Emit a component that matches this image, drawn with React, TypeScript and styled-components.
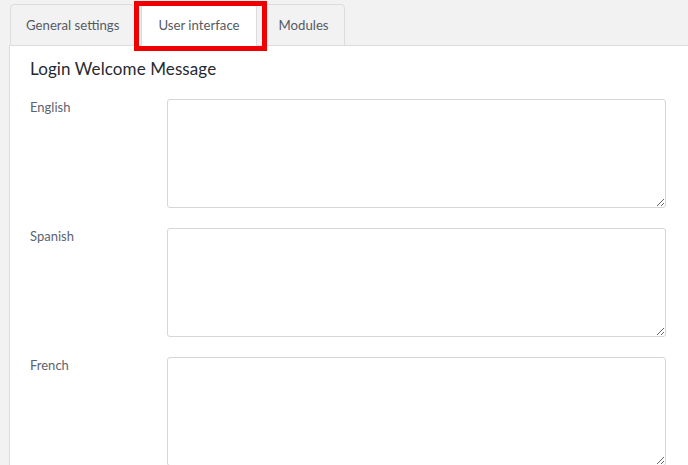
import React from 'react'
import styled, { createGlobalStyle } from 'styled-components'

const GlobalStyle = createGlobalStyle`
  html, body {
    margin: 0;
    padding: 0;
    background: #f2f2f2;
    font-family: Lato, "Open Sans", sans-serif;
  }
`

const Page = styled.div`
  padding: 4px 0 0 9px;
  width: 700px;
  overflow: hidden;
`

const TabBar = styled.div`
  display: flex;
  gap: 6px;
  padding-left: 1px;
  position: relative;
  z-index: 1;
  margin-bottom: -1px;
`

const Tab = styled.div<{ $active?: boolean }>`
  position: relative;
  padding: 0 ${p => (p.$active ? '16px' : '15px')};
  display: flex;
  align-items: center;
  font-size: 13.2px;
  color: #555b63;
  border: 1px solid #dcdcdc;
  border-bottom: ${p => (p.$active ? '1px solid #fff' : '1px solid #dcdcdc')};
  border-radius: 4px 4px 0 0;
  background: ${p => (p.$active ? '#fff' : '#f2f2f2')};
  box-sizing: border-box;
  height: 42px;
`

const Highlight = styled.div`
  position: absolute;
  z-index: 2;
  left: -8px;
  top: -4px;
  right: -11px;
  bottom: -6px;
  border: 5px solid #ee0000;
  pointer-events: none;
`

const Panel = styled.div`
  background: #fff;
  border: 1px solid #dcdcdc;
  border-right: none;
  padding: 12px 0 20px 20px;
  min-height: 420px;
`

const Heading = styled.h2`
  margin: 0 0 20px 0;
  font-size: 17px;
  font-weight: 400;
  color: #262a30;
  letter-spacing: 0.1px;
`

const Row = styled.div`
  display: flex;
  margin-bottom: 20px;
`

const Label = styled.label`
  width: 137px;
  flex-shrink: 0;
  padding-top: 0;
  font-size: 13px;
  color: #5b6470;
`

const Area = styled.textarea`
  width: 499px;
  height: 109px;
  box-sizing: border-box;
  border: 1px solid #d6d6d6;
  border-radius: 3px;
  background: #fff;
  margin: 0;
  font-family: inherit;
  resize: vertical;
`

const languages = ['English', 'Spanish', 'French']

export default function App() {
  return (
    <>
      <GlobalStyle />
      <Page>
        <TabBar>
          <Tab>General settings</Tab>
          <Tab $active>
            User interface
            <Highlight />
          </Tab>
          <Tab>Modules</Tab>
        </TabBar>
        <Panel>
          <Heading>Login Welcome Message</Heading>
          {languages.map(lang => (
            <Row key={lang}>
              <Label>{lang}</Label>
              <Area />
            </Row>
          ))}
        </Panel>
      </Page>
    </>
  )
}
